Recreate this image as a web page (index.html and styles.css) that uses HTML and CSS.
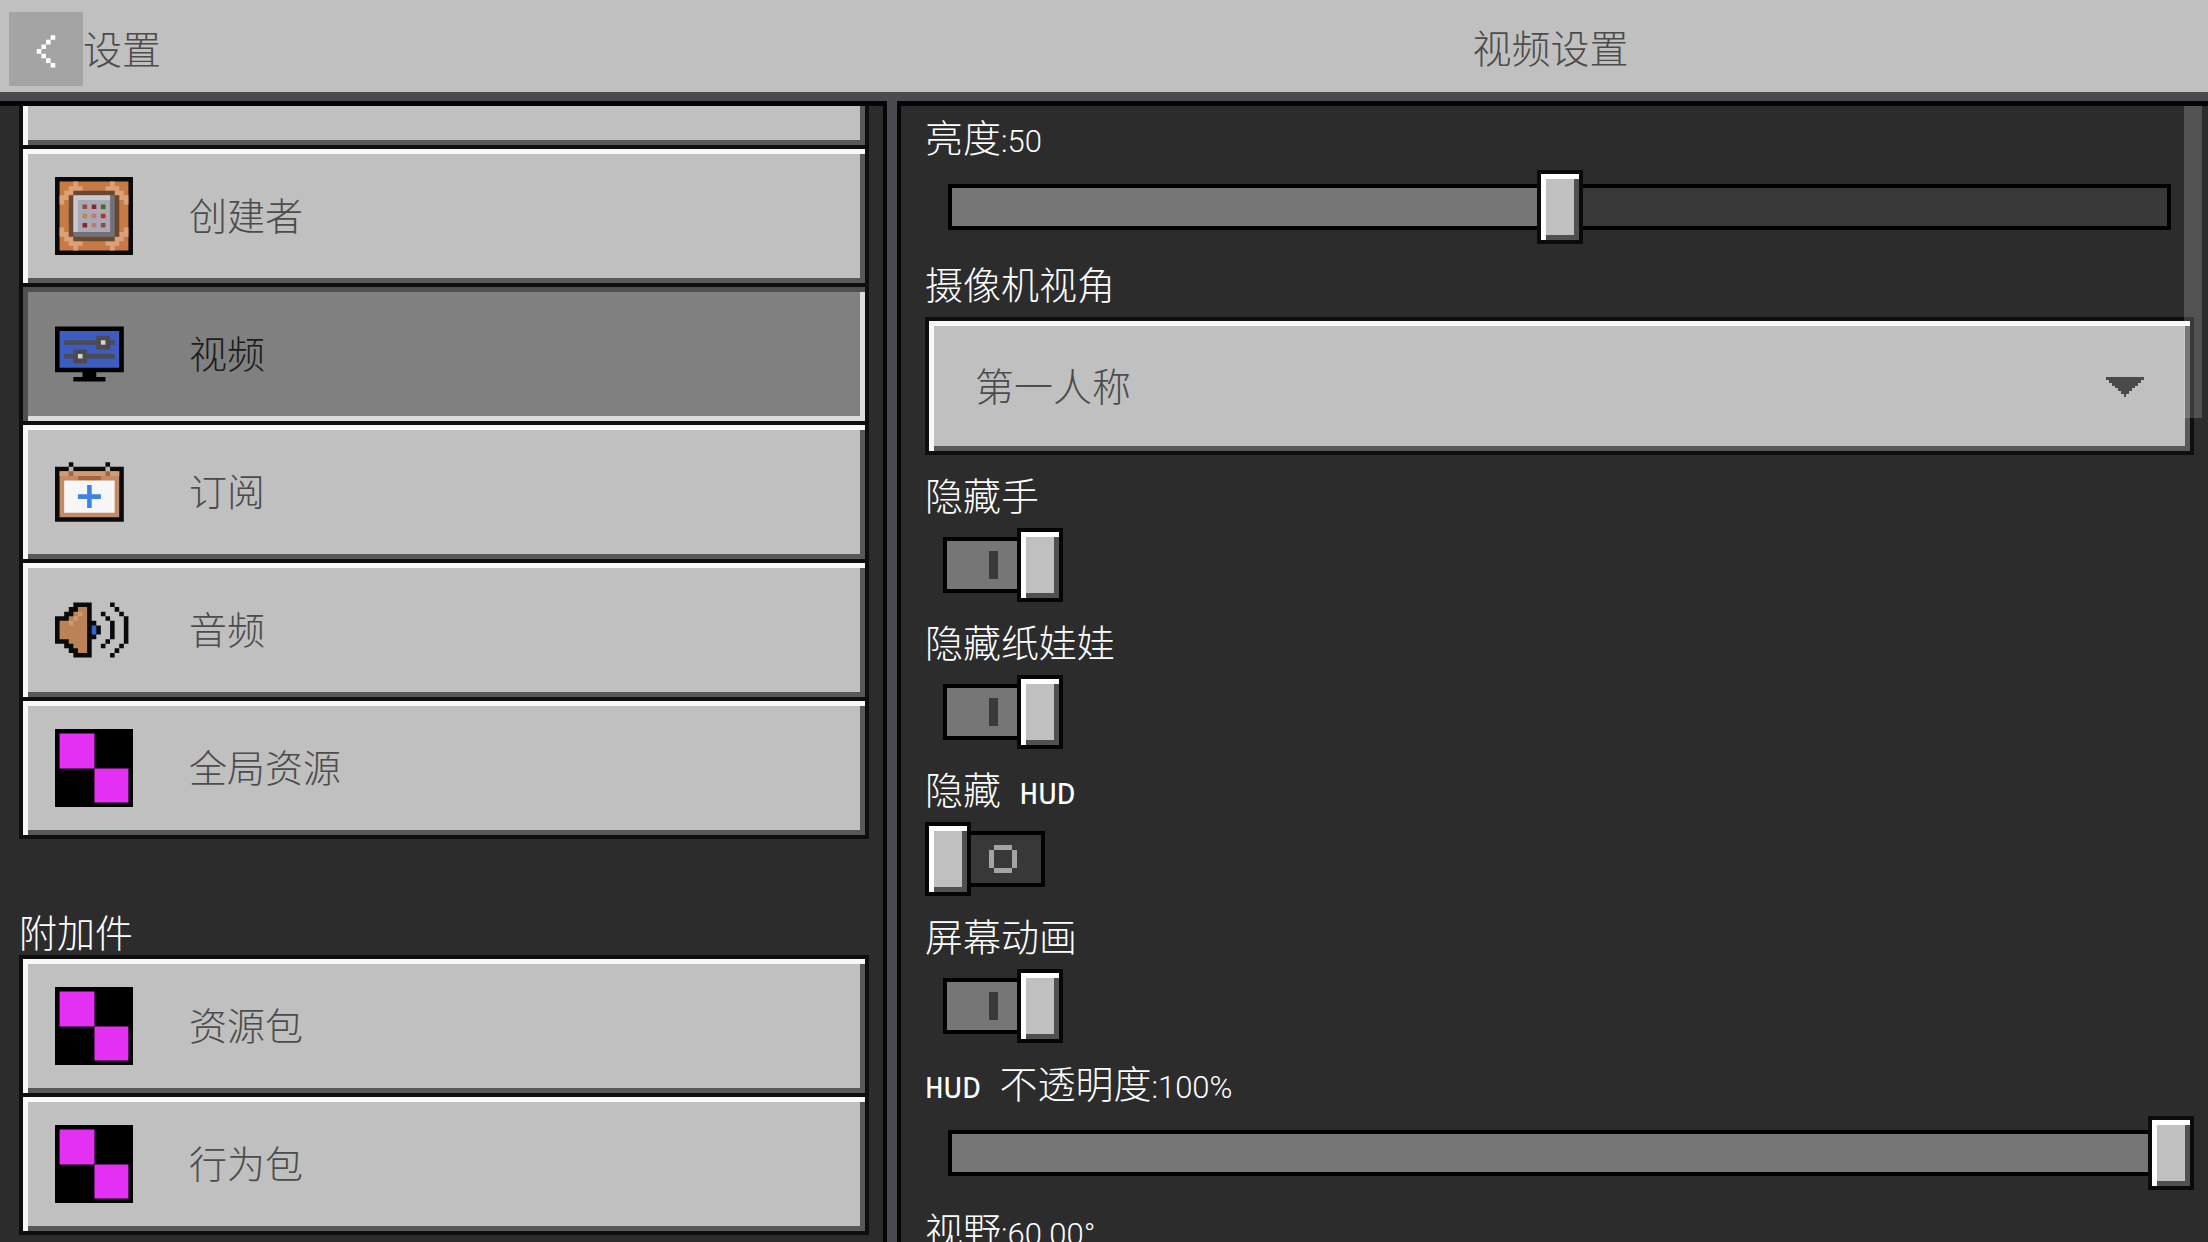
FILE: index.html
```html
<!DOCTYPE html>
<html lang="zh-CN">
<head>
    <meta charset="utf-8">
    <title>视频设置</title>
    <link rel="stylesheet" href="styles.css">
</head>
<body>
  <!-- shared pixel icons -->
  <svg class="sprites" aria-hidden="true">
    <symbol id="missing" viewBox="0 0 17 17">
      <path fill="#000" d="M0 0h17v17H0z"/>
      <path fill="#e430f3" d="M1 1h7.6v7.6H1zM8.6 8.6H16V16H8.6z"/>
    </symbol>
  </svg>

  <header class="topbar">
    <div class="topbar-left">
      <button class="back" aria-label="返回">
        <svg viewBox="0 0 16 16"><path fill="#fff" d="M9 5h1v1H9zM8 6h1v1H8zM7 7h1v1H7zM6 8h1v1H6zM7 9h1v1H7zM8 10h1v1H8zM9 11h1v1H9z"/></svg>
      </button>
      <span class="title">设置</span>
    </div>
    <h1 class="title page-title">视频设置</h1>
  </header>

  <main class="panels">
    <nav class="panel sidebar">
      <div class="menu menu-top">
        <button class="item cut" aria-label="上一项"></button>
        <button class="item">
          <svg class="icon" viewBox="0 0 17 17">
            <path fill="#0a0a0a" d="M0 0h17v17H0z"/>
            <path fill="#c87a45" d="M1 1h15v15H1z"/>
            <path fill="#dda17a" d="M4 1h1v1h1v1H4v1H3v1H2v1H1V4h1V3h1V2h1zM13 1h-1v1h-1v1h2v1h1v1h1v1h1V4h-1V3h-1V2h-1zM4 16h1v-1h1v-1H4v-1H3v-1H2v-1H1v2h1v1h1v1h1zM13 16h-1v-1h-1v-1h2v-1h1v-1h1v-1h1v2h-1v1h-1v1h-1z"/>
            <path fill="#67492f" d="M4 3h9v1h1v9h-1v1H4v-1H3V4h1z"/>
            <path fill="#74717c" d="M4 4h9v9H4z"/>
            <path fill="#cbc7d2" d="M4 4h8v1H5v7H4z"/>
            <path fill="#aca8b4" d="M5 5h7v7H5z"/>
            <path fill="#8f4a4c" d="M6 6h1v1H6zM10 10h1v1h-1z"/>
            <path fill="#842828" d="M8 6h1v1H8zM6 10h1v1H6z"/>
            <path fill="#46692c" d="M10 6h1v1h-1z"/>
            <path fill="#b78a4c" d="M6 8h1v1H6z"/>
            <path fill="#bf7876" d="M8 8h1v1H8zM8 10h1v1H8z"/>
            <path fill="#ad3434" d="M10 8h1v1h-1z"/>
          </svg>
          <span>创建者</span>
        </button>
        <button class="item selected" aria-current="page">
          <svg class="icon" viewBox="0 -2.5 17 17">
            <path fill="#000" d="M0 0h15v10H9v1h2v1H4v-1h2v-1H0z"/>
            <path fill="#3c5cc2" d="M1 1h13v8H1z"/>
            <path fill="#4a4a50" d="M2 3h7V2h3v1h1v1h-1v1H9V4H2zM2 6h2V5h3v1h6v1H7v1H4V7H2z"/>
            <path fill="#d3d3d3" d="M10 3h1v1h-1zM5 6h1v1H5z"/>
          </svg>
          <span>视频</span>
        </button>
        <button class="item">
          <svg class="icon" viewBox="0 -2 17 17">
            <path fill="#0a0a0a" d="M0 1h3V0h1v1h7V0h1v1h3v12H0z"/>
            <path fill="#c18c65" d="M1 2h13v10H1z"/>
            <path fill="#d59872" d="M1 2h13v1H1z"/>
            <path fill="#a5653e" d="M3 2h1v1H3zM11 2h1v1h-1zM5 3h5v1H5z"/>
            <path fill="#b5b5b5" d="M3 1h1v1H3zM11 1h1v1h-1z"/>
            <path fill="#f7f7f7" d="M2 4h11v7H2z"/>
            <path fill="#3f82e4" d="M7 5h1v2h2v1H8v2H7V8H5V7h2z"/>
          </svg>
          <span>订阅</span>
        </button>
        <button class="item">
          <svg class="icon" viewBox="0 -2.5 17 17">
            <path fill="#0a0a0a" d="M4 0h4v4h1v1h1v2H9v1H8v4H4v-1H3v-1H2V9H0V3h2V2h1V1h1z"/>
            <path fill="#b98355" d="M5 1h2v10H5v-1H4V9H3V8H1V4h2V3h1V2h1z"/>
            <path fill="#cc9a6f" d="M5 2h1v1H5zM4 3h1v1H4zM3 4h1v1H3z"/>
            <path fill="#2f62d4" d="M8 5h1v2H8z"/>
            <path fill="#0a0a0a" d="M10 2h1v1h-1zM11 3h1v1h-1zM12 4h1v4h-1zM11 8h1v1h-1zM10 9h1v1h-1zM12 0h1v1h-1zM13 1h1v1h-1zM14 2h1v1h-1zM15 3h1v6h-1zM14 9h1v1h-1zM13 10h1v1h-1zM12 11h1v1h-1z"/>
          </svg>
          <span>音频</span>
        </button>
        <button class="item">
          <svg class="icon"><use href="#missing"/></svg>
          <span>全局资源</span>
        </button>
      </div>

      <h2 class="label menu-heading">附加件</h2>
      <div class="menu">
        <button class="item">
          <svg class="icon"><use href="#missing"/></svg>
          <span>资源包</span>
        </button>
        <button class="item">
          <svg class="icon"><use href="#missing"/></svg>
          <span>行为包</span>
        </button>
      </div>
    </nav>

    <section class="panel settings">
      <div class="field">
        <label class="label" for="brightness">亮度<span class="num">:50</span></label>
        <div class="slider" style="--value: 50%">
          <input type="range" id="brightness" min="0" max="100" value="50">
        </div>
      </div>
      <div class="field">
        <label class="label" for="camera">摄像机视角</label>
        <div class="dropdown">
          <select id="camera">
            <option>第一人称</option>
          </select>
          <svg class="arrow" viewBox="0 0 13 7" shape-rendering="crispEdges"><path fill="#4a4a4a" d="M0 0h13v1h-1v1h-1v1h-1v1H9v1H8v1H7v1H6V6H5V5H4V4H3V3H2V2H1V1H0z"/></svg>
        </div>
      </div>
      <div class="field">
        <label class="label" for="hideHand">隐藏手</label>
        <input class="toggle" type="checkbox" id="hideHand" checked>
      </div>
      <div class="field">
        <label class="label" for="hideDoll">隐藏纸娃娃</label>
        <input class="toggle" type="checkbox" id="hideDoll" checked>
      </div>
      <div class="field">
        <label class="label" for="hideHud">隐藏<span class="latin"> HUD</span></label>
        <input class="toggle" type="checkbox" id="hideHud">
      </div>
      <div class="field">
        <label class="label" for="screenAnim">屏幕动画</label>
        <input class="toggle" type="checkbox" id="screenAnim" checked>
      </div>
      <div class="field">
        <label class="label" for="hudOpacity"><span class="latin">HUD </span>不透明度<span class="num">:100%</span></label>
        <div class="slider" style="--value: 100%">
          <input type="range" id="hudOpacity" min="0" max="100" value="100">
        </div>
      </div>
      <div class="field">
        <label class="label" for="fov">视野<span class="num">:60.00°</span></label>
        <div class="slider" style="--value: 50%">
          <input type="range" id="fov" min="30" max="90" value="60">
        </div>
      </div>
      <div class="scrollbar"></div>
    </section>
  </main>
</body>
</html>
```
FILE: styles.css
```css
*, *::before, *::after {
    box-sizing: border-box;
}

body {
    margin: 0;
    height: 100vh;
    display: flex;
    flex-direction: column;
    overflow: hidden;
    background: #4c4a4e;
    color: #fff;
    font-family: "Noto Sans CJK SC", sans-serif;
    font-size: 39px;
    font-weight: 300;
}

button, select, input {
    margin: 0;
    padding: 0;
    border: 0;
    border-radius: 0;
    font: inherit;
    color: inherit;
}

.sprites {
    position: absolute;
    width: 0;
    height: 0;
}

/* top bar */
.topbar {
    flex: none;
    display: grid;
    grid-template-columns: 897fr 1311fr;
    align-items: center;
    height: 92px;
    background: #c0c0c0;
    color: #4c4c4c;
}

.topbar-left {
    display: flex;
    align-items: center;
    padding: 5px 0 0 9px;
}

.back {
    width: 74px;
    height: 74px;
    background: #a4a4a4;
}

.back svg {
    display: block;
    width: 74px;
    height: 74px;
}

.title {
    margin: 0;
    padding-bottom: 4px;
    font-size: 39px;
    font-weight: 300;
    line-height: 40px;
}

.page-title {
    padding: 0 4px 0 0;
    text-align: center;
}

/* panels */
.panels {
    flex: 1;
    min-height: 0;
    display: grid;
    grid-template-columns: 887fr 1311fr;
    gap: 10px;
    padding-top: 9px;
}

.panel {
    position: relative;
    min-height: 0;
    overflow: hidden;
    background: #2c2c2d;
    border-top: 5px solid #050505;
}

.sidebar {
    border-right: 4px solid #050505;
    padding: 0 14px 0 19px;
}

.settings {
    border-left: 4px solid #050505;
    padding: 12px 14px 0 24px;
}

/* side menu */
.menu {
    display: flex;
    flex-direction: column;
    gap: 4px;
    padding: 4px;
    background: #0e0e0e;
}

.menu-top {
    padding-top: 0;
}

.item {
    display: flex;
    align-items: center;
    gap: 56px;
    height: 134px;
    padding: 0 32px;
    background: #c0c0c0;
    box-shadow: inset 5px 5px #f8f8f8, inset -5px -5px #585858;
    color: #4c4c4c;
    font-size: 38px;
    line-height: 40px;
}

.item span {
    padding-bottom: 4px;
}

.item.cut {
    height: 39px;
    box-shadow: inset 5px 0 #f8f8f8, inset -5px -5px #585858;
}

.item.selected {
    background: #808080;
    box-shadow: inset 5px 5px #505050, inset -5px -5px #dcdcdc;
    color: #1c1c1c;
}

.icon {
    flex: none;
    width: 78px;
    height: 78px;
}

.label {
    display: block;
    margin: 0;
    font-size: 38px;
    font-weight: 300;
    line-height: 36px;
    white-space: pre;
}

.menu-heading {
    padding-top: 74px;
    padding-bottom: 6px;
}

.latin {
    font-family: "Liberation Mono", monospace;
    font-size: 31px;
    line-height: 1;
}

.num {
    font-family: Roboto, sans-serif;
    font-size: 31px;
    line-height: 1;
}

/* settings */
.field {
    display: flex;
    flex-direction: column;
    align-items: flex-start;
    gap: 12px;
    margin-bottom: 21px;
}

.field .label {
    height: 40px;
}

.slider {
    display: grid;
    width: 100%;
}

.slider::before {
    content: "";
    grid-area: 1 / 1;
    height: 46px;
    margin: 14px 23px;
    border: 4px solid #000;
    background: linear-gradient(#767676, #767676) no-repeat 0 0 / var(--value) 100% #383838;
}

.slider input {
    grid-area: 1 / 1;
    width: 100%;
    height: 74px;
    background: none;
    appearance: none;
}

.slider input::-webkit-slider-thumb {
    appearance: none;
    width: 46px;
    height: 74px;
    border: 4px solid #0a0a0a;
    background: #c0c0c0;
    box-shadow: inset 5px 5px #fff, inset -5px -5px #505050;
}

.dropdown {
    position: relative;
    width: 100%;
}

.dropdown select {
    display: block;
    width: 100%;
    height: 138px;
    padding: 0 46px 4px;
    appearance: none;
    border: 4px solid #0e0e0e;
    background: #c0c0c0;
    box-shadow: inset 5px 5px #f8f8f8, inset -5px -5px #585858;
    color: #4c4c4c;
}

.arrow {
    position: absolute;
    top: 60px;
    right: 50px;
    width: 38px;
    height: 20px;
    pointer-events: none;
}

.toggle {
    display: flex;
    align-items: center;
    width: 138px;
    height: 74px;
    appearance: none;
}

.toggle::before {
    content: "";
    flex: none;
    width: 46px;
    height: 74px;
    border: 4px solid #050505;
    background: #c0c0c0;
    box-shadow: inset 5px 5px #fff, inset -5px -5px #505050;
}

/* track with the O mark */
.toggle::after {
    content: "";
    width: 74px;
    height: 56px;
    border: 4px solid #000;
    border-left: 0;
    background:
        linear-gradient(#a4a4a4, #a4a4a4) 23px 10px / 18px 5px,
        linear-gradient(#a4a4a4, #a4a4a4) 23px 33px / 18px 5px,
        linear-gradient(#a4a4a4, #a4a4a4) 18px 15px / 5px 18px,
        linear-gradient(#a4a4a4, #a4a4a4) 41px 15px / 5px 18px,
        #383838;
    background-repeat: no-repeat;
}

.toggle:checked {
    flex-direction: row-reverse;
}

/* track with the I mark */
.toggle:checked::after {
    border-left: 4px solid #000;
    border-right: 0;
    background: linear-gradient(#3a3a3a, #3a3a3a) no-repeat 42px 10px / 9px 28px #767676;
}

.scrollbar {
    position: absolute;
    top: 0;
    right: 6px;
    width: 18px;
    height: 27.5%;
    background: rgba(255, 255, 255, 0.18);
}
```
